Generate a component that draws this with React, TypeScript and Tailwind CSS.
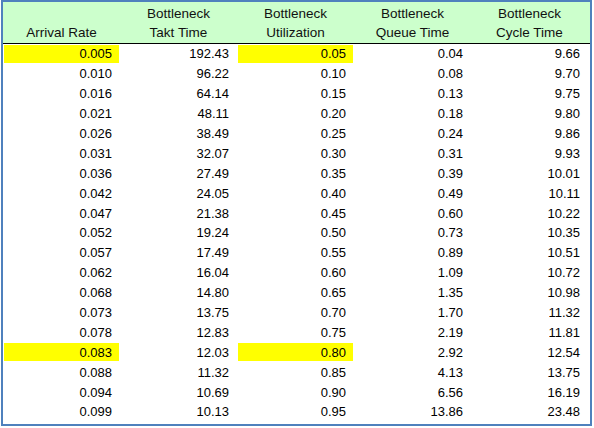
const rows: string[][] = [
    ["0.005", "192.43", "0.05", "0.04", "9.66"],
    ["0.010", "96.22", "0.10", "0.08", "9.70"],
    ["0.016", "64.14", "0.15", "0.13", "9.75"],
    ["0.021", "48.11", "0.20", "0.18", "9.80"],
    ["0.026", "38.49", "0.25", "0.24", "9.86"],
    ["0.031", "32.07", "0.30", "0.31", "9.93"],
    ["0.036", "27.49", "0.35", "0.39", "10.01"],
    ["0.042", "24.05", "0.40", "0.49", "10.11"],
    ["0.047", "21.38", "0.45", "0.60", "10.22"],
    ["0.052", "19.24", "0.50", "0.73", "10.35"],
    ["0.057", "17.49", "0.55", "0.89", "10.51"],
    ["0.062", "16.04", "0.60", "1.09", "10.72"],
    ["0.068", "14.80", "0.65", "1.35", "10.98"],
    ["0.073", "13.75", "0.70", "1.70", "11.32"],
    ["0.078", "12.83", "0.75", "2.19", "11.81"],
    ["0.083", "12.03", "0.80", "2.92", "12.54"],
    ["0.088", "11.32", "0.85", "4.13", "13.75"],
    ["0.094", "10.69", "0.90", "6.56", "16.19"],
    ["0.099", "10.13", "0.95", "13.86", "23.48"],
]

const headers: [string, string][] = [
    ["", "Arrival Rate"],
    ["Bottleneck", "Takt Time"],
    ["Bottleneck", "Utilization"],
    ["Bottleneck", "Queue Time"],
    ["Bottleneck", "Cycle Time"],
]

// highlighted rows get yellow in the arrival rate and utilization columns
const highlightRows = [0, 15]
const highlightCols = [0, 2]

export default function App() {
    return (
        <div className="w-[594px] h-[428px] bg-white" style={{ fontFamily: '"Liberation Sans", Arial, sans-serif' }}>
            <div className="ml-[1px] w-[591px] h-[426px] border-2 border-[#4f81bd] bg-white text-[13px] text-black">
                {/* Header */}
                <div className="grid grid-cols-[117px_117px_117px_117px_117px] h-[42px] bg-[#ccffcc] border-b border-black">
                    {headers.map(([a, b], i) => (
                        <div key={i} className="flex flex-col justify-end items-center pb-[1px] leading-[19px] text-[13.5px] text-[#111]">
                            <div>{a}</div>
                            <div>{b}</div>
                        </div>
                    ))}
                </div>

                {/* Rows */}
                {rows.map((row, r) => (
                    <div key={r} className="grid grid-cols-[117px_117px_117px_117px_117px] h-[19.9px]">
                        {row.map((v, c) => {
                            const hl = highlightRows.includes(r) && highlightCols.includes(c)
                            return (
                                <div key={c} className="p-px">
                                    <div className={`h-full flex items-center justify-end pr-[7px] leading-none ${hl ? "bg-[#ffff00]" : ""}`}>
                                        {v}
                                    </div>
                                </div>
                            )
                        })}
                    </div>
                ))}
            </div>
        </div>
    )
}
